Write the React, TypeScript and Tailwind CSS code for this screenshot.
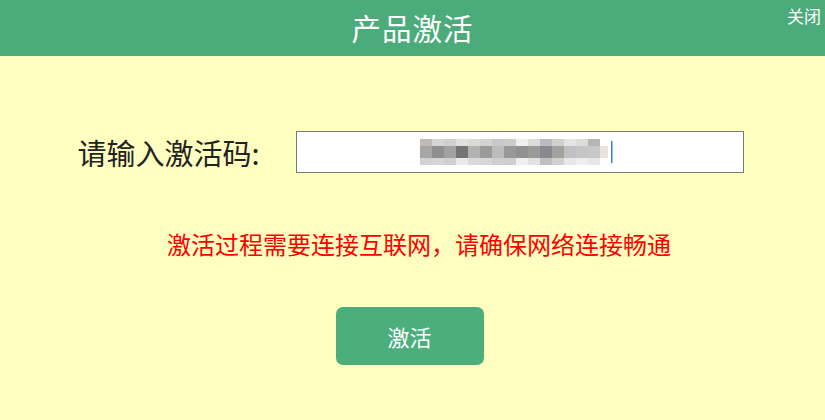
import React from 'react';

const mosaic: string[][] = [
  ['#bdbab8', '#d8d6d4', '#cfcfd0', '#e2e0dc', '#dcdad6', '#d4d2ce', '#c8c8ca', '#cecac6', '#eef0f0', '#dedcd8', '#bcbac0', '#d2d0cc', '#e4e4e4', '#dcdcd8', '#b8b6b4'],
  ['#a8a6a4', '#8e8e8e', '#a2a2a2', '#747474', '#b2b2b0', '#9a9a98', '#bcbcbc', '#9a9896', '#929090', '#9c9a98', '#888a90', '#a2a2a0', '#c0c0c4', '#c4c6c8', '#c8c8c6'],
  ['#d4d2d0', '#d6d6d6', '#cfd0d2', '#eaeaea', '#dadada', '#d8d8d8', '#cfcfd0', '#d0cecc', '#eef0f0', '#e4e2e0', '#c0c0c2', '#d2d0cc', '#e8e8e8', '#eeeeee', '#e8e8e6'],
];

// pixelated code that was blurred out in the screenshot
const BlurredCode: React.FC = () => (
  <svg width="196" height="26" viewBox="0 0 196 26">
    {mosaic.map((row, r) =>
      row.map((c, i) => (
        <rect
          key={`${r}-${i}`}
          x={i * 12}
          y={r === 0 ? 0 : r === 1 ? 7 : 19}
          width="12"
          height={r === 1 ? 12 : 7}
          fill={c}
        />
      ))
    )}
    <rect x="180" y="7" width="8" height="12" fill="#eae4dc" />
    <rect x="191" y="2" width="1.5" height="22" fill="#3a7bd5" />
  </svg>
);

export default function App() {
  return (
    <div
      className="w-[825px] h-[420px] bg-[#ffffc0] flex flex-col relative"
      style={{ fontFamily: '"Noto Sans CJK SC", "Noto Sans", sans-serif' }}
    >
      <div className="h-[56px] bg-[#4bab7a] flex items-center justify-center shrink-0">
        <span className="text-white text-[29.5px] leading-none tracking-[1px]">产品激活</span>
      </div>
      <span className="absolute top-[5px] right-[4px] text-white text-[17px] leading-[22px]">关闭</span>

      <div className="flex flex-col items-center">
        <div className="mt-[75px] flex items-center gap-[36px] pr-[4px]">
          <span className="text-[29px] leading-[42px] text-[#222]">请输入激活码:</span>
          <div className="w-[448px] h-[42px] bg-white border border-[#7a7a7a] flex items-center pl-[123px]">
            <BlurredCode />
          </div>
        </div>

        <p className="mt-[56px] pl-[13px] text-[24px] leading-[30px] text-[#ff0000]">
          激活过程需要连接互联网，请确保网络连接畅通
        </p>

        <button className="mt-[48px] mr-[6px] w-[148px] h-[58px] rounded-[7px] bg-[#4bae7c] text-white text-[22px] flex items-center justify-center">
          激活
        </button>
      </div>
    </div>
  );
}
